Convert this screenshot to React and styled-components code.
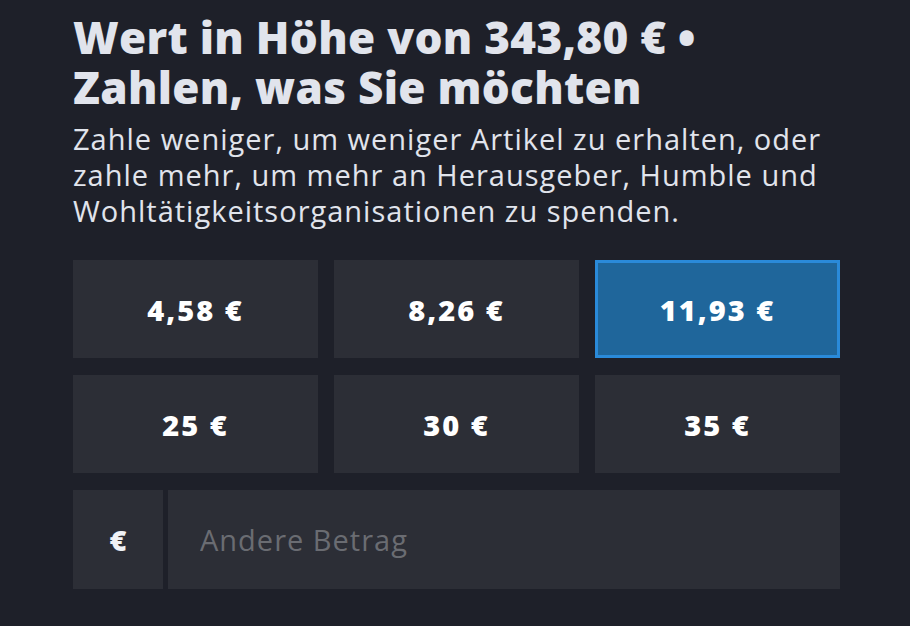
import React from "react";
import styled, { createGlobalStyle } from "styled-components";

const Global = createGlobalStyle`
  html, body { margin: 0; padding: 0; background: #1e2029; }
  body { font-family: "Open Sans", "Noto Sans", sans-serif; }
`;

const Page = styled.div`
  width: 910px;
  height: 626px;
  background: #1e2029;
  padding: 12px 70px 0 73px;
  box-sizing: border-box;
  overflow: hidden;
`;

const Title = styled.h1`
  margin: 0;
  font-size: 44px;
  line-height: 50px;
  font-weight: 800;
  color: #e1e4ec;
  letter-spacing: 0.3px;
`;

const TitleLine = styled.span`
  display: block;
`;

const Lead = styled.p`
  margin: 9px 0 0;
  font-size: 29px;
  line-height: 36px;
  font-weight: 400;
  color: #e1e4ec;
  letter-spacing: 1px;
  white-space: nowrap;
`;

const Grid = styled.div`
  margin-top: 31px;
  display: grid;
  grid-template-columns: repeat(3, 1fr);
  column-gap: 16px;
  row-gap: 17px;
  width: 767px;
`;

const Option = styled.button`
  height: 98px;
  box-sizing: border-box;
  border: 3px solid ${(p) => (p.$active ? "#2a8ad9" : "transparent")};
  background: ${(p) => (p.$active ? "#1f669b" : "#2c2e36")};
  color: #ffffff;
  font-family: inherit;
  font-size: 29px;
  font-weight: 800;
  letter-spacing: 2px;
  display: flex;
  align-items: center;
  justify-content: center;
  padding: 0;
`;

const InputRow = styled.div`
  margin-top: 17px;
  display: flex;
  gap: 5px;
  width: 767px;
  height: 99px;
`;

const Currency = styled.div`
  width: 90px;
  background: #2c2e36;
  color: #f0f2f6;
  font-size: 29px;
  font-weight: 800;
  display: flex;
  align-items: center;
  justify-content: center;
`;

const Amount = styled.input`
  flex: 1;
  border: none;
  outline: none;
  background: #2c2e36;
  color: #ffffff;
  font-family: inherit;
  font-size: 29px;
  letter-spacing: 1px;
  padding: 0 0 0 32px;
  &::placeholder { color: #6a6c72; }
`;

const amounts = ["4,58 €", "8,26 €", "11,93 €", "25 €", "30 €", "35 €"];

export default function App() {
  return (
    <Page>
      <Global />
      <Title>
        <TitleLine>Wert in Höhe von 343,80 € •</TitleLine>
        <TitleLine>Zahlen, was Sie möchten</TitleLine>
      </Title>
      <Lead>
        Zahle weniger, um weniger Artikel zu erhalten, oder<br />zahle mehr, um mehr an Herausgeber, Humble und<br />Wohltätigkeitsorganisationen zu spenden.
      </Lead>
      <Grid>
        {amounts.map((a, i) => (
          <Option key={a} $active={i === 2}>{a}</Option>
        ))}
      </Grid>
      <InputRow>
        <Currency>€</Currency>
        <Amount placeholder="Andere Betrag" />
      </InputRow>
    </Page>
  );
}
